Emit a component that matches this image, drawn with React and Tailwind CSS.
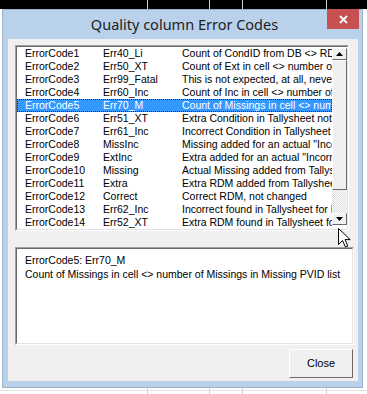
import React from 'react';

const rows = [
  ['ErrorCode1', 'Err40_Li', 'Count of CondID from DB <> RDM count in cell'],
  ['ErrorCode2', 'Err50_XT', 'Count of Ext in cell <> number of Ext in list'],
  ['ErrorCode3', 'Err99_Fatal', 'This is not expected, at all, never'],
  ['ErrorCode4', 'Err60_Inc', 'Count of Inc in cell <> number of Inc in list'],
  ['ErrorCode5', 'Err70_M', 'Count of Missings in cell <> number of Missings in Missing PVID list'],
  ['ErrorCode6', 'Err51_XT', 'Extra Condition in Tallysheet not in DB'],
  ['ErrorCode7', 'Err61_Inc', 'Incorrect Condition in Tallysheet'],
  ['ErrorCode8', 'MissInc', 'Missing added for an actual "Incorrect"'],
  ['ErrorCode9', 'ExtInc', 'Extra added for an actual "Incorrect"'],
  ['ErrorCode10', 'Missing', 'Actual Missing added from Tallysheet'],
  ['ErrorCode11', 'Extra', 'Extra RDM added from Tallysheet'],
  ['ErrorCode12', 'Correct', 'Correct RDM, not changed'],
  ['ErrorCode13', 'Err62_Inc', 'Incorrect found in Tallysheet for RDM'],
  ['ErrorCode14', 'Err52_XT', 'Extra RDM found in Tallysheet for RDM'],
];

const selected = 4;

// raised 3D box used for the scrollbar pieces
const raised = 'border border-t-white border-l-white border-b-[#696969] border-r-[#696969] bg-[#f0f0f0]';

const ScrollButton = ({ up }) => (
  <div className={`h-[12px] flex items-center justify-center ${raised}`}>
    <svg width="7" height="4" viewBox="0 0 7 4">
      {up ? <path d="M3.5 0 L7 4 L0 4 Z" fill="#000" /> : <path d="M0 0 L7 0 L3.5 4 Z" fill="#000" />}
    </svg>
  </div>
);

export default function App() {
  return (
    <div className="relative w-[367px] h-[394px] overflow-hidden bg-white font-['Liberation_Sans',sans-serif]">
      <div className="h-[9px] bg-black" />

      {/* spreadsheet grid behind the dialog */}
      <div className="absolute top-0 bottom-0 left-[147px] w-px bg-[#cfcfcf]" />
      <div className="absolute top-0 bottom-0 left-[209px] w-px bg-[#cfcfcf]" />
      <div className="absolute top-0 bottom-0 left-[242px] w-px bg-[#cfcfcf]" />
      <div className="absolute top-0 bottom-0 left-[326px] w-px bg-[#cfcfcf]" />
      <div className="absolute left-0 right-0 top-[390px] h-px bg-[#e2e2e2]" />

      <div className="relative z-10 ml-[2px] w-[361px] h-[379px] bg-[#b9d1ea] border border-[#9fb4cc] flex flex-col">
        <div className="relative h-[29px] flex items-center justify-center">
          <span className="font-['Noto_Sans',sans-serif] text-[14.5px] text-[#1e1e1e] pl-[4px]">Quality column Error Codes</span>
          <div className="absolute -top-px right-[3px] w-[32px] h-[20px] bg-[#c75050] flex items-center justify-center">
            <svg width="9" height="9" viewBox="0 0 9 9">
              <path d="M1 1 L8 8 M8 1 L1 8" stroke="#fff" strokeWidth="1.8" />
            </svg>
          </div>
        </div>

        <div className="ml-[5px] w-[350px] h-[342px] bg-[#f0f0f0] flex flex-col pl-[7px] pt-[6px] text-[10.5px] text-black">
          {/* list box */}
          <div className="w-[334px] h-[186px] border border-t-[#a0a0a0] border-l-[#a0a0a0] border-b-white border-r-white">
            <div className="h-full border border-t-[#696969] border-l-[#696969] border-b-[#e3e3e3] border-r-[#e3e3e3] bg-white flex">
              <div className="w-[315px] overflow-hidden">
                {rows.map((r, i) => (
                  <div
                    key={r[0]}
                    className={`h-[13px] leading-[13px] flex whitespace-nowrap ${i === selected ? 'bg-[#3399ff] text-white outline-1 outline-dotted outline-[#0a2a6a] -outline-offset-1' : ''}`}
                  >
                    <span className="w-[86px] pl-[8px] shrink-0">{r[0]}</span>
                    <span className="w-[79px] shrink-0">{r[1]}</span>
                    <span className="shrink-0">{r[2]}</span>
                  </div>
                ))}
              </div>
              <div className="w-[15px] flex flex-col pt-px">
                <ScrollButton up />
                <div className={`h-[130px] ${raised}`} />
                <div className="h-[23px] bg-[repeating-conic-gradient(#ffffff_0_25%,#dcdcdc_0_50%)] bg-[length:2px_2px]" />
                <ScrollButton />
              </div>
            </div>
          </div>

          {/* detail box */}
          <div className="mt-[16px] w-[339px] h-[98px] border border-t-[#a0a0a0] border-l-[#a0a0a0] border-b-white border-r-white">
            <div className="h-full border border-t-[#696969] border-l-[#696969] border-b-[#e3e3e3] border-r-[#e3e3e3] bg-white pl-[8px] pt-[4px] leading-[14px]">
              <div>ErrorCode5: Err70_M</div>
              <div className="whitespace-nowrap">Count of Missings in cell &lt;&gt; number of Missings in Missing PVID list</div>
            </div>
          </div>

          <button className="mt-[4px] ml-[274px] w-[64px] h-[29px] border border-t-white border-l-white border-b-[#696969] border-r-[#696969] bg-[#f0f0f0] text-[11px] flex items-center justify-center">
            Close
          </button>
        </div>
      </div>

      {/* mouse pointer */}
      <svg className="absolute left-[338px] top-[228px] z-20" width="13" height="20" viewBox="0 0 13 20">
        <path d="M0.5 0.5 L0.5 16.5 L4.5 12.5 L7.5 19 L9.8 18 L7 11.6 L12.2 11.6 Z" fill="#fff" stroke="#000" strokeWidth="1" strokeLinejoin="round" />
      </svg>
    </div>
  );
}
